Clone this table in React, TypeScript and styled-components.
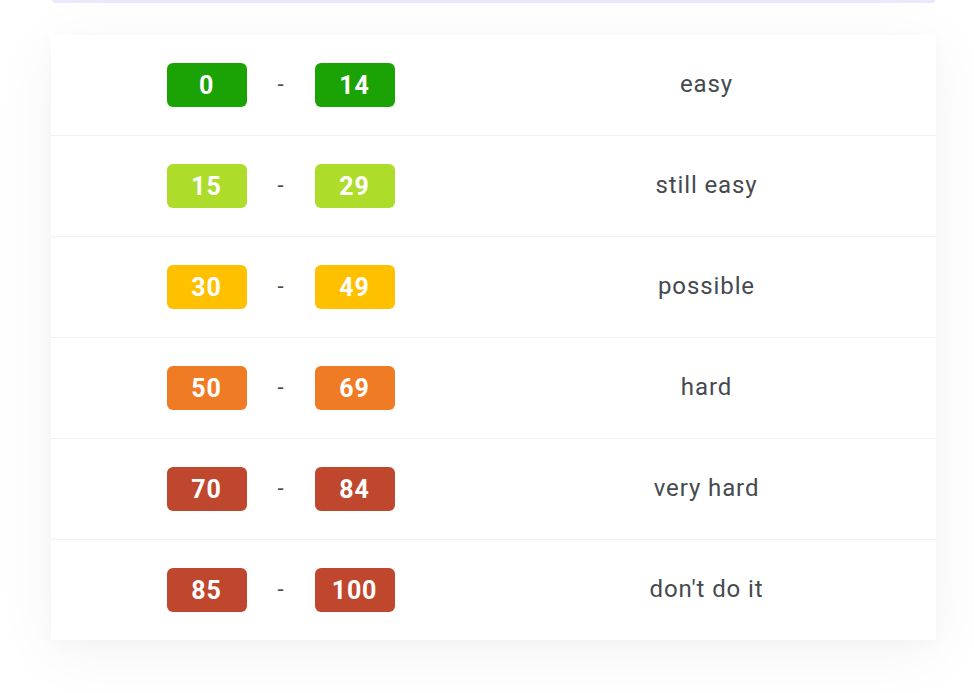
import styled, { createGlobalStyle } from 'styled-components';

const GlobalStyle = createGlobalStyle`
  html, body {
    margin: 0;
    padding: 0;
    background: #ffffff;
    font-family: Roboto, 'Liberation Sans', sans-serif;
  }
`;

const Page = styled.div`
  padding: 0 38px 0 51px;
  overflow: hidden;
  height: 693px;
`;

const TopStrip = styled.div`
  height: 3px;
  margin: 0 1px;
  background: #e9e9fb;
  border-radius: 0 0 6px 6px;
`;

const Card = styled.div`
  margin-top: 32px;
  background: #ffffff;
  box-shadow: 0 12px 60px rgba(0, 0, 0, 0.05), 0 4px 14px rgba(0, 0, 0, 0.025);
`;

const Row = styled.div`
  display: grid;
  grid-template-columns: 459px 1fr;
  align-items: center;
  height: 100px;
  border-bottom: 1px solid #eeeff3;

  &:last-child {
    border-bottom: none;
  }
`;

const Range = styled.div`
  display: flex;
  align-items: center;
  justify-content: center;
`;

const Badge = styled.span<{ $color: string }>`
  display: inline-flex;
  align-items: center;
  justify-content: center;
  width: 80px;
  height: 44px;
  border-radius: 6px;
  background: ${({ $color }) => $color};
  color: #ffffff;
  font-weight: 700;
  font-size: 25px;
  letter-spacing: 0.8px;
`;

const Dash = styled.span`
  width: 68px;
  text-align: center;
  color: #454a50;
  font-size: 22px;
  margin-top: -2px;
`;

const Label = styled.div`
  text-align: center;
  padding-right: 33px;
  color: #454a50;
  font-size: 24px;
  letter-spacing: 0.9px;
  margin-top: -2px;
`;

const levels = [
  { from: 0, to: 14, color: '#1ba205', label: 'easy' },
  { from: 15, to: 29, color: '#addc2b', label: 'still easy' },
  { from: 30, to: 49, color: '#ffc000', label: 'possible' },
  { from: 50, to: 69, color: '#ef7c24', label: 'hard' },
  { from: 70, to: 84, color: '#bf472e', label: 'very hard' },
  { from: 85, to: 100, color: '#bf472e', label: "don't do it" },
];

export default function App() {
  return (
    <Page>
      <GlobalStyle />
      <TopStrip />
      <Card>
        {levels.map((l) => (
          <Row key={l.label}>
            <Range>
              <Badge $color={l.color}>{l.from}</Badge>
              <Dash>-</Dash>
              <Badge $color={l.color}>{l.to}</Badge>
            </Range>
            <Label>{l.label}</Label>
          </Row>
        ))}
      </Card>
    </Page>
  );
}
